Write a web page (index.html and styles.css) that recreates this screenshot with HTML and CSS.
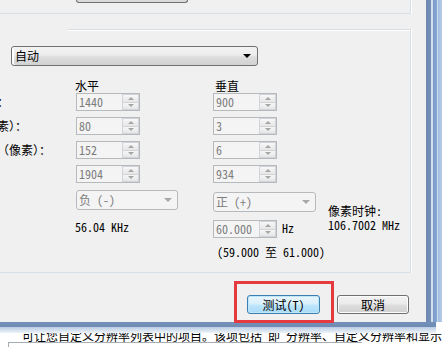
FILE: index.html
```html
<html>
	<head>
		<title>自定义分辨率</title>
		<link rel="stylesheet" href="styles.css">
	</head>
	<body>
		<div class="screen">
			<div class="dialog">
				<div class="client">
					<div class="group group-top">
						<div class="stub"></div>
					</div>
					<div class="group group-timing">
						<div class="group-head"></div>
						<div class="combo combo-std">自动<i class="arrow"></i></div>
						<div class="col-heads">
							<span class="col-h">水平</span>
							<span class="col-v">垂直</span>
						</div>
						<div class="timing">
							<span class="lbl">活动像素：</span>
							<div class="spin"><span class="val">1440</span><span class="spin-btns"><i class="up"></i><i class="down"></i></span></div>
							<div class="spin"><span class="val">900</span><span class="spin-btns"><i class="up"></i><i class="down"></i></span></div>
							<span></span>

							<span class="lbl">前沿（像素）：</span>
							<div class="spin"><span class="val">80</span><span class="spin-btns"><i class="up"></i><i class="down"></i></span></div>
							<div class="spin"><span class="val">3</span><span class="spin-btns"><i class="up"></i><i class="down"></i></span></div>
							<span></span>

							<span class="lbl">同步宽度（像素）：</span>
							<div class="spin"><span class="val">152</span><span class="spin-btns"><i class="up"></i><i class="down"></i></span></div>
							<div class="spin"><span class="val">6</span><span class="spin-btns"><i class="up"></i><i class="down"></i></span></div>
							<span></span>

							<span class="lbl">总像素：</span>
							<div class="spin"><span class="val">1904</span><span class="spin-btns"><i class="up"></i><i class="down"></i></span></div>
							<div class="spin"><span class="val">934</span><span class="spin-btns"><i class="up"></i><i class="down"></i></span></div>
							<span></span>

							<span class="lbl">极性：</span>
							<div class="combo combo-off combo-neg">负 (-)<i class="arrow"></i></div>
							<div class="combo combo-off combo-pos">正 (+)<i class="arrow"></i></div>
							<div class="clock">
								<span>像素时钟:</span>
								<span>106.7002 MHz</span>
							</div>

							<span class="lbl">刷新率：</span>
							<span class="plain">56.04 KHz</span>
							<div class="refresh">
								<div class="spin"><span class="val">60.000</span><span class="spin-btns"><i class="up"></i><i class="down"></i></span></div>
								<span class="unit">Hz</span>
							</div>

							<span></span>
							<span></span>
							<span class="range">(59.000 至 61.000)</span>
						</div>
					</div>
					<div class="buttons">
						<button class="btn btn-default">测试(T)</button>
						<button class="btn btn-cancel">取消</button>
					</div>
				</div>
				<div class="frame-right"></div>
			</div>
			<div class="frame-bottom"></div>
			<div class="parent">
				<div class="parent-text">可让您自定义分辨率列表中的项目。该项包括 即 分辨率、自定义分辨率和显示器</div>
				<div class="parent-list"></div>
			</div>
			<div class="mark"></div>
		</div>
	</body>
</html>
```

FILE: styles.css
```css
body{
	margin:0;
	background:#fff;
	font-family:"Noto Sans Mono CJK SC","Noto Sans CJK SC",monospace;
	font-size:12px;
	color:#000;
}
.screen{
	position:relative;
	width:442px;
	height:347px;
	overflow:hidden;
	background:#fff;
}
.dialog{
	display:flex;
	height:322px;
}
.client{
	width:426px;
	background:#f0f0f0;
}
.frame-right{
	width:16px;
	background:linear-gradient(to right,#6c88b0 0,#7490b8 5px,#d4dfec 5px,#d4dfec 7px,#7b9ccb 7px,#86a6d2 11px,#cddcee 11px,#cddcee 12px,#a3bde0 12px,#b6cce8 16px);
}
.frame-bottom{
	height:11px;
	width:436px;
	background:linear-gradient(#7290b9 0,#6e8bb4 5px,#b9cbe2 5px,#eef3f9 11px);
}

/* group boxes */
.group{
	box-sizing:border-box;
	width:411px;
	border-right:1px solid #d5dfe5;
	box-shadow:1px 0 0 #fff;
}
.group-top{
	height:14px;
	border-bottom:1px solid #d5dfe5;
}
.stub{
	margin-left:76px;
	width:112px;
	height:3px;
	box-sizing:border-box;
	border:1px solid #707070;
	border-top:none;
	border-radius:0 0 3px 3px;
	background:#dadada;
}
.group-timing{
	margin-top:15px;
	height:244px;
	border-bottom:1px solid #d5dfe5;
}
.group-head{
	margin-left:68px;
	border-top:1px solid #d5dfe5;
	box-shadow:0 1px 0 #fff;
}

/* combo boxes */
.combo{
	position:relative;
	box-sizing:border-box;
	height:20px;
	line-height:18px;
	padding-left:3px;
	border:1px solid #707070;
	border-radius:3px;
}
.combo .arrow{
	position:absolute;
	top:7px;
	right:6px;
	border-left:4px solid transparent;
	border-right:4px solid transparent;
	border-top:4px solid #000;
}
.combo-std{
	margin:16px 0 0 11px;
	width:247px;
	background:linear-gradient(#f3f3f3,#ececec 45%,#dedede 55%,#d2d2d2);
	box-shadow:inset 2px 0 0 #fff;
}
.combo-off{
	border-color:#b6babd;
	background:#f4f4f4;
	color:#7d7d7d;
	padding-left:2px;
}
.combo-off .arrow{
	right:5px;
	border-top-color:#a8a8a8;
}
.combo-neg{
	width:102px;
	margin-top:1px;
}
.combo-pos{
	width:103px;
	margin-top:3px;
}

/* timing grid */
.col-heads{
	display:flex;
	margin-top:14px;
	padding-left:75px;
	line-height:12px;
}
.col-h{
	width:140px;
}
.timing{
	display:grid;
	grid-template-columns:76px 137px 115px 1fr;
	grid-template-rows:24px 24px 24px 24px 31px 27px 14px;
	align-items:start;
	margin-top:1px;
	line-height:12px;
}
.lbl{
	margin-left:-51px;
	white-space:nowrap;
	line-height:18px;
}
.spin{
	display:flex;
	width:64px;
	height:18px;
	box-sizing:border-box;
	border:1px solid #b6babd;
	background:#f4f4f4;
}
.val{
	flex:1;
	padding-left:2px;
	line-height:16px;
	color:#7d7d7d;
}
.spin-btns{
	display:flex;
	flex-direction:column;
	width:17px;
}
.spin-btns i{
	flex:1;
	display:flex;
	align-items:center;
	justify-content:center;
	border:1px solid #d0d4d8;
	background:linear-gradient(#f7f7f7,#e6e6e6);
}
.spin-btns .up{
	border-bottom:none;
}
.spin-btns .up::before{
	content:"";
	border-left:3px solid transparent;
	border-right:3px solid transparent;
	border-bottom:3px solid #a5a5a5;
}
.spin-btns .down::before{
	content:"";
	border-left:3px solid transparent;
	border-right:3px solid transparent;
	border-top:3px solid #a5a5a5;
}
.clock{
	grid-row:span 2;
	display:flex;
	flex-direction:column;
	padding-top:15px;
	line-height:14px;
}
.plain{
	margin-left:-1px;
	line-height:14px;
}
.refresh{
	display:flex;
	align-items:flex-start;
	gap:5px;
}
.unit{
	margin-top:1px;
	line-height:14px;
}
.range{
	grid-column:3 / span 2;
	padding-left:4px;
	margin-top:-1px;
}

/* buttons */
.buttons{
	display:flex;
	justify-content:flex-end;
	gap:17px;
	margin-top:22px;
	padding-right:17px;
}
.btn{
	height:19px;
	padding:0;
	font:inherit;
	line-height:17px;
	color:#000;
	border:1px solid #707070;
	border-radius:3px;
	background:linear-gradient(#f2f2f2,#ebebeb 45%,#dddddd 55%,#cfcfcf);
}
.btn-default{
	width:73px;
	border-color:#3c7fb1;
	box-shadow:inset 0 0 0 1px #bfe6f9;
	background:linear-gradient(#eaf6fd,#d9f0fc 45%,#bee6fd 55%,#a7d9f5);
}
.btn-cancel{
	width:72px;
	box-shadow:inset 0 0 0 1px #fcfcfc;
}

/* parent window behind the dialog */
.parent{
	height:14px;
	overflow:hidden;
}
.parent-text{
	margin:-4px 0 0 22px;
	line-height:13px;
	white-space:nowrap;
}
.parent-list{
	margin-left:8px;
	width:353px;
	height:10px;
	border-top:1px solid #a5acb5;
	border-left:1px solid #a5acb5;
}

/* annotation */
.mark{
	position:absolute;
	left:234px;
	top:281px;
	width:100px;
	height:42px;
	box-sizing:border-box;
	border:3px solid #e53b3e;
}
```
